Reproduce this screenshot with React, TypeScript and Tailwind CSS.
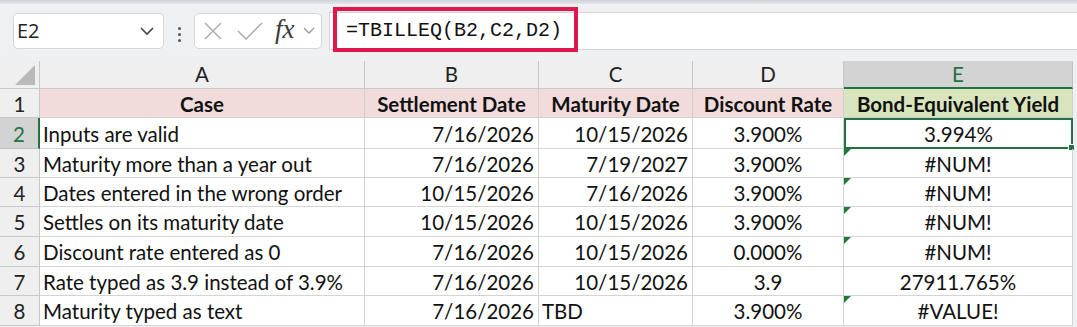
import React from "react";

const COLS = ["A", "B", "C", "D", "E"];
const ROW_H = [29, 31, 29, 29, 30, 30, 29, 30];

type Cell = { t: string; a: "l" | "r" | "c"; tri?: boolean };

const data: Cell[][] = [
  [
    { t: "Inputs are valid", a: "l" },
    { t: "7/16/2026", a: "r" },
    { t: "10/15/2026", a: "r" },
    { t: "3.900%", a: "c" },
    { t: "3.994%", a: "c" },
  ],
  [
    { t: "Maturity more than a year out", a: "l" },
    { t: "7/16/2026", a: "r" },
    { t: "7/19/2027", a: "r" },
    { t: "3.900%", a: "c" },
    { t: "#NUM!", a: "c", tri: true },
  ],
  [
    { t: "Dates entered in the wrong order", a: "l" },
    { t: "10/15/2026", a: "r" },
    { t: "7/16/2026", a: "r" },
    { t: "3.900%", a: "c" },
    { t: "#NUM!", a: "c", tri: true },
  ],
  [
    { t: "Settles on its maturity date", a: "l" },
    { t: "10/15/2026", a: "r" },
    { t: "10/15/2026", a: "r" },
    { t: "3.900%", a: "c" },
    { t: "#NUM!", a: "c", tri: true },
  ],
  [
    { t: "Discount rate entered as 0", a: "l" },
    { t: "7/16/2026", a: "r" },
    { t: "10/15/2026", a: "r" },
    { t: "0.000%", a: "c" },
    { t: "#NUM!", a: "c", tri: true },
  ],
  [
    { t: "Rate typed as 3.9 instead of 3.9%", a: "l" },
    { t: "7/16/2026", a: "r" },
    { t: "10/15/2026", a: "r" },
    { t: "3.9", a: "c" },
    { t: "27911.765%", a: "c" },
  ],
  [
    { t: "Maturity typed as text", a: "l" },
    { t: "7/16/2026", a: "r" },
    { t: "TBD", a: "l" },
    { t: "3.900%", a: "c" },
    { t: "#VALUE!", a: "c", tri: true },
  ],
];

const headers = ["Case", "Settlement Date", "Maturity Date", "Discount Rate", "Bond-Equivalent Yield"];

const alignCls = (a: "l" | "r" | "c") =>
  a === "l" ? "justify-start pl-[3px]" : a === "r" ? "justify-end pr-[4px]" : "justify-center";

export default function App() {
  return (
    <div
      className="w-[1077px] h-[327px] overflow-hidden bg-[#eef0f2] text-[#111]"
      style={{ fontFamily: "Lato, 'Noto Sans', sans-serif" }}
    >
      {/* top strip */}
      <div className="h-[4px] bg-gradient-to-b from-[#cfd3d7] to-[#e3e6e9]" />
      {/* toolbar */}
      <div className="relative h-[57px] flex items-start">
        {/* name box */}
        <div className="mt-[9px] ml-[13px] w-[151px] h-[36px] bg-white border border-[#d6d6d6] rounded-[5px] flex items-center justify-between pl-[3px] pr-[8px]">
          <span className="text-[20px] text-[#222]" style={{ fontFamily: "'Open Sans', sans-serif" }}>
            E2
          </span>
          <svg width="16" height="10" viewBox="0 0 16 10">
            <path d="M2 2 L8 8 L14 2" fill="none" stroke="#444" strokeWidth="1.6" />
          </svg>
        </div>
        {/* dots */}
        <div className="mt-[23px] ml-[14px] flex flex-col gap-[3px]">
          <div className="w-[3px] h-[3px] rounded-full bg-[#555]" />
          <div className="w-[3px] h-[3px] rounded-full bg-[#555]" />
          <div className="w-[3px] h-[3px] rounded-full bg-[#555]" />
        </div>
        {/* fx box */}
        <div className="mt-[9px] ml-[13px] w-[128px] h-[36px] bg-white border border-[#d6d6d6] rounded-[5px] flex items-center pl-[9px]">
          <svg width="18" height="18" viewBox="0 0 18 18">
            <path d="M1 1 L17 17 M17 1 L1 17" stroke="#a8a8a8" strokeWidth="1.4" />
          </svg>
          <svg width="26" height="18" viewBox="0 0 26 18" className="ml-[15px]">
            <path d="M1 9 L9 17 L25 1" fill="none" stroke="#a8a8a8" strokeWidth="1.4" />
          </svg>
          <span
            className="ml-[12px] text-[27px] italic leading-none text-[#3a3a3a] -mt-[4px]"
            style={{ fontFamily: "'Liberation Serif', serif" }}
          >
            fx
          </span>
          <svg width="12" height="8" viewBox="0 0 12 8" className="ml-[8px]">
            <path d="M1 1 L6 6 L11 1" fill="none" stroke="#999" strokeWidth="1.3" />
          </svg>
        </div>
        {/* formula bar */}
        <div className="mt-[8px] ml-[7px] flex-1 h-[38px] bg-white border-y border-l border-[#d4d4d4] flex items-center pl-[16px]">
          <span
            className="text-[20px] text-[#111]"
            style={{ fontFamily: "'Liberation Mono', monospace" }}
          >
            =TBILLEQ(B2,C2,D2)
          </span>
        </div>
        {/* red annotation */}
        <div className="absolute left-[333px] top-[3px] w-[245px] h-[45px] border-[4px] border-[#e0174a] pointer-events-none" />
      </div>

      {/* grid */}
      <div
        className="relative grid bg-white w-[1073px] text-[20.5px] leading-none"
        style={{
          gridTemplateColumns: "40px 325px 174px 154px 151px 229px",
          gridTemplateRows: `28px ${ROW_H.map((h) => h + "px").join(" ")}`,
        }}
      >
        {/* corner */}
        <div className="bg-[#efefef] border-r border-b border-[#c8c8c8] flex items-end justify-end pr-[4px] pb-[3px]">
          <svg width="20" height="20" viewBox="0 0 20 20">
            <path d="M20 0 L20 20 L0 20 Z" fill="#b9b9b9" />
          </svg>
        </div>
        {COLS.map((c) => (
          <div
            key={c}
            className={
              c === "E"
                ? "bg-[#d3d3d3] border-r border-[#c0c0c0] border-b-2 border-b-[#217346] text-[#217346] flex items-center justify-center"
                : "bg-[#efefef] border-r border-b border-[#c8c8c8] text-[#222] flex items-center justify-center"
            }
          >
            {c}
          </div>
        ))}

        {/* row 1 */}
        <div className="bg-[#efefef] border-r border-b border-[#c8c8c8] flex items-center justify-center text-[#222] pt-[2px]">
          1
        </div>
        {headers.map((h, i) => (
          <div
            key={h}
            className={
              (i === 4 ? "bg-[#d8e4bc]" : "bg-[#f2dcdb]") +
              " border-r border-b border-[#d0d0d0] flex items-center justify-center font-bold text-[#111] pt-[2px]"
            }
          >
            {h}
          </div>
        ))}

        {/* data rows */}
        {data.map((row, ri) => {
          const rn = ri + 2;
          const sel = rn === 2;
          return (
            <React.Fragment key={rn}>
              <div
                className={
                  sel
                    ? "bg-[#d3d3d3] border-b border-[#c0c0c0] border-r-2 border-r-[#217346] flex items-center justify-center text-[#217346] pt-[2px]"
                    : "bg-[#efefef] border-r border-b border-[#c8c8c8] flex items-center justify-center text-[#222] pt-[2px]"
                }
              >
                {rn}
              </div>
              {row.map((cell, ci) => {
                const isSel = sel && ci === 4;
                return (
                  <div
                    key={ci}
                    className={
                      "relative flex items-center whitespace-nowrap pt-[2px] " +
                      alignCls(cell.a) +
                      (isSel
                        ? " border-2 border-[#217346]"
                        : " border-r border-b border-[#d4d4d4]")
                    }
                  >
                    {cell.tri && (
                      <div className="absolute left-0 top-0 w-0 h-0 border-t-[7px] border-t-[#1f7a35] border-r-[7px] border-r-transparent" />
                    )}
                    {cell.t}
                    {isSel && (
                      <div className="absolute -right-[4px] -bottom-[4px] w-[7px] h-[7px] bg-[#217346] border border-white" />
                    )}
                  </div>
                );
              })}
            </React.Fragment>
          );
        })}
      </div>
    </div>
  );
}
